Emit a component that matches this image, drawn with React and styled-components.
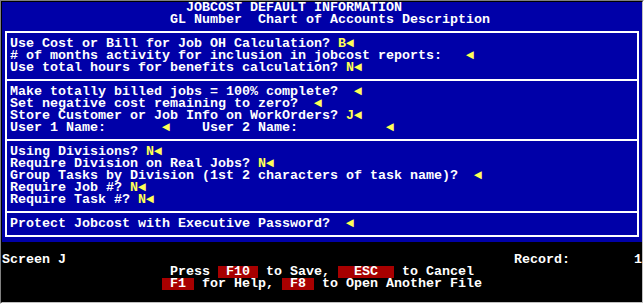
import styled, { createGlobalStyle } from "styled-components"

const GlobalStyle = createGlobalStyle`
    html, body {
        margin: 0;
        padding: 0;
        background: #000000;
    }
`

const sections = [
    [
        [{ label: "Use Cost or Bill for Job OH Calculation? ", value: "B" }],
        [{ label: "# of months activity for inclusion in jobcost reports: ", value: "  " }],
        [{ label: "Use total hours for benefits calculation? ", value: "N" }],
    ],
    [
        [{ label: "Make totally billed jobs = 100% complete? ", value: " " }],
        [{ label: "Set negative cost remaining to zero? ", value: " " }],
        [{ label: "Store Customer or Job Info on WorkOrders? ", value: "J" }],
        [
            { label: "User 1 Name:", value: "       " },
            { label: "    User 2 Name:", value: "           " },
        ],
    ],
    [
        [{ label: "Using Divisions? ", value: "N" }],
        [{ label: "Require Division on Real Jobs? ", value: "N" }],
        [{ label: "Group Tasks by Division (1st 2 characters of task name)? ", value: " " }],
        [{ label: "Require Job #? ", value: "N" }],
        [{ label: "Require Task #? ", value: "N" }],
    ],
    [
        [{ label: "Protect Jobcost with Executive Password? ", value: " " }],
    ],
]

export default function App() {
    return (
        <>
            <GlobalStyle />
            <Window>
                <Console>
                    <Panel>
                        <Line>{" ".repeat(23)}JOBCOST DEFAULT INFORMATION</Line>
                        <Line>{" ".repeat(21)}GL Number  Chart of Accounts Description</Line>
                        <Frame>
                            {sections.map((rows, i) => (
                                <div key={i}>
                                    {i > 0 && <Divider />}
                                    {rows.map((fields, j) => (
                                        <Line key={j}>
                                            {fields.map((f, k) => (
                                                <span key={k}>
                                                    {f.label}
                                                    <Value>{f.value}</Value>
                                                    <Arrow>◄</Arrow>
                                                </span>
                                            ))}
                                        </Line>
                                    ))}
                                </div>
                            ))}
                        </Frame>
                    </Panel>
                    <Footer>
                        <Line />
                        <Line>{"Screen J".padEnd(64)}{"Record:".padEnd(15)}1</Line>
                        <Line>
                            {" ".repeat(21)}Press <Key> F10 </Key> to Save, <Key>  ESC  </Key> to Cancel
                        </Line>
                        <Line>
                            {" ".repeat(20)}<Key> F1 </Key> for Help, <Key> F8 </Key> to Open Another File
                        </Line>
                        <Line />
                    </Footer>
                </Console>
            </Window>
        </>
    )
}

const Window = styled.div`
    width: 644px;
    height: 304px;
    box-sizing: border-box;
    border: 1px solid;
    border-color: #808080 #ffffff #ffffff #808080;
`
const Console = styled.div`
    height: 100%;
    box-sizing: border-box;
    border: 1px solid;
    border-color: #000000 #c0c0c0 #c0c0c0 #000000;
    background: #000000;
    display: flex;
    flex-direction: column;
    font-family: "Liberation Mono", "DejaVu Sans Mono", monospace;
    font-weight: 700;
    font-size: 13.33px;
    line-height: 12px;
    color: #ffffff;
`
const Panel = styled.div`
    height: 240px;
    background: #0000a8;
    display: flex;
    flex-direction: column;
`
const Line = styled.div`
    height: 12px;
    white-space: pre;
`
const Frame = styled.div`
    margin: 5px 3px 0 3px;
    border: 2px solid #ffffff;
    padding: 5px 3px;
`
const Divider = styled.div`
    height: 2px;
    margin: 5px -3px;
    background: #ffffff;
`
const Value = styled.span`
    color: #ffff55;
`
const Arrow = styled.span`
    color: #ffff55;
`
const Footer = styled.div`
    display: flex;
    flex-direction: column;
`
const Key = styled.span`
    background: #a80000;
    color: #ffffff;
    display: inline-block;
    height: 12px;
`
